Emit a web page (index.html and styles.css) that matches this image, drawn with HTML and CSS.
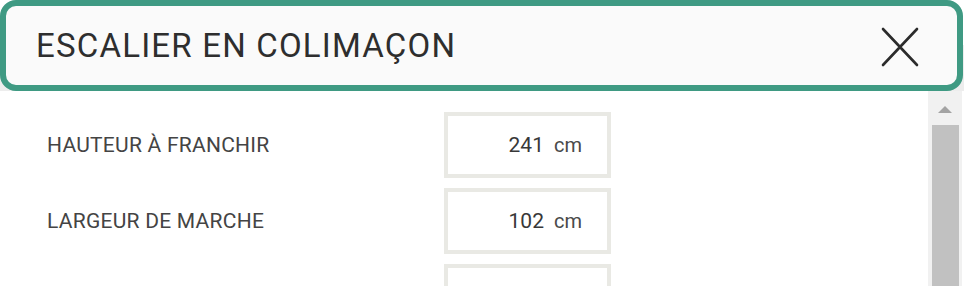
FILE: index.html
```html
<!DOCTYPE html>
<html lang="fr">
<head>
<meta charset="utf-8">
<title>Escalier en colimaçon</title>
<link rel="stylesheet" href="styles.css">
</head>
<body>
<div class="dialog">
  <div class="head-wrap">
    <header class="head">
      <h1 class="title">ESCALIER EN COLIMAÇON</h1>
      <button class="close" aria-label="Fermer">
        <svg width="38" height="40" viewBox="0 0 38 40" aria-hidden="true">
          <path d="M2 2 L36 38 M36 2 L2 38" stroke="#2b2b2b" stroke-width="2.6" stroke-linecap="round" fill="none"/>
        </svg>
      </button>
    </header>
  </div>
  <div class="body">
    <div class="content">
      <div class="row">
        <span class="label">HAUTEUR À FRANCHIR</span>
        <div class="field"><span class="value">241</span><span class="unit">cm</span></div>
      </div>
      <div class="row">
        <span class="label">LARGEUR DE MARCHE</span>
        <div class="field"><span class="value">102</span><span class="unit">cm</span></div>
      </div>
      <div class="row">
        <span class="label"></span>
        <div class="field"></div>
      </div>
    </div>
    <div class="scrollbar">
      <div class="arrow"></div>
      <div class="thumb"></div>
    </div>
  </div>
</div>
</body>
</html>
```
FILE: styles.css
```css
html, body {
  margin: 0;
  padding: 0;
  background: #fff;
  overflow: hidden;
}
body {
  font-family: Roboto, "Liberation Sans", sans-serif;
  width: 964px;
  height: 286px;
}
.dialog {
  display: flex;
  flex-direction: column;
  height: 286px;
}
.head-wrap {
  background: linear-gradient(to bottom, #fff 0, #fff 50%, #ededed 50%, #ededed 100%);
  padding-right: 1px;
}
.head {
  box-sizing: border-box;
  height: 91px;
  border: 6px solid #3f9a83;
  border-radius: 16px;
  background: #fafafa;
  display: flex;
  align-items: center;
  justify-content: space-between;
  padding: 0 38px 0 30px;
}
.title {
  margin: 0;
  font-size: 33px;
  font-weight: 400;
  color: #2e2e2e;
  letter-spacing: 1.2px;
}
.close {
  border: 0;
  background: transparent;
  padding: 0;
  display: flex;
  margin-top: 2px;
}
.body {
  flex: 1;
  display: flex;
  min-height: 0;
}
.content {
  flex: 1;
  display: flex;
  flex-direction: column;
  gap: 10px;
  padding: 21px 0 0 47px;
  overflow: hidden;
}
.row {
  display: flex;
  align-items: center;
  flex-shrink: 0;
}
.label {
  width: 397px;
  font-size: 21px;
  color: #444;
  letter-spacing: 0.25px;
}
.field {
  box-sizing: border-box;
  width: 167px;
  height: 66px;
  border: 4px solid #e9e9e4;
  background: #fff;
  display: flex;
  align-items: center;
  justify-content: flex-end;
  padding-right: 25px;
  flex-shrink: 0;
}
.value {
  font-size: 21px;
  color: #383838;
}
.unit {
  font-size: 20px;
  color: #4a4a4a;
  margin-left: 10px;
}
.scrollbar {
  width: 34px;
  margin-right: 2px;
  background: #f1f1f1;
  display: flex;
  flex-direction: column;
  align-items: center;
  padding-top: 15px;
}
.arrow {
  width: 0;
  height: 0;
  border-left: 7px solid transparent;
  border-right: 7px solid transparent;
  border-bottom: 7px solid #a3a3a3;
}
.thumb {
  margin-top: 12px;
  width: 27px;
  flex: 1;
  background: #c1c1c1;
}
```
